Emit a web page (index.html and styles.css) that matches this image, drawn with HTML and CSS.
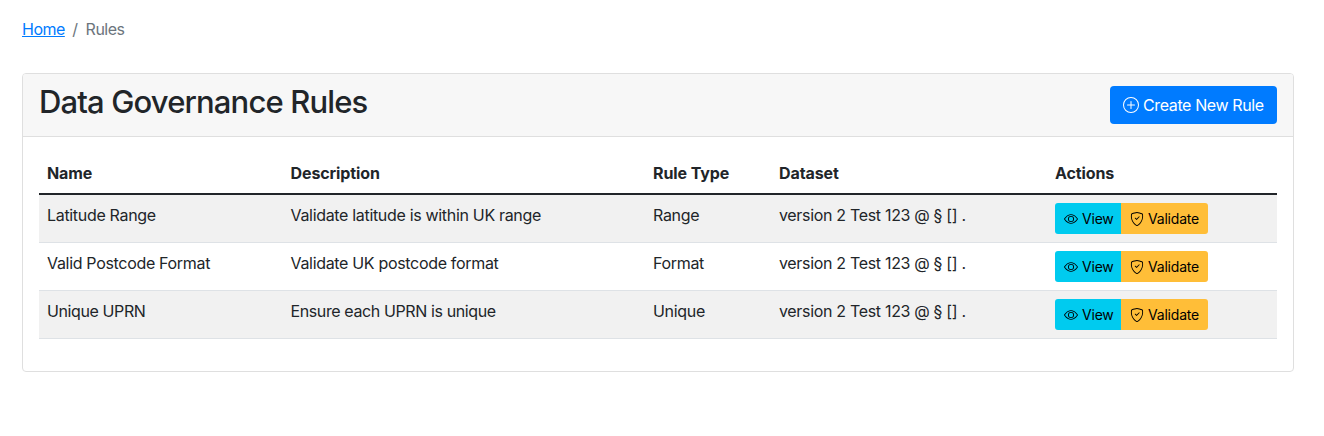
FILE: index.html
```html
<!DOCTYPE html>
<html lang="en">
<head>
<meta charset="utf-8">
<title>Data Governance Rules</title>
<link rel="stylesheet" href="styles.css">
</head>
<body>
<svg class="sprite" aria-hidden="true">
  <symbol id="plus-circle" viewBox="0 0 16 16"><path d="M8 15A7 7 0 1 1 8 1a7 7 0 0 1 0 14m0 1A8 8 0 1 0 8 0a8 8 0 0 0 0 16"/><path d="M8 4a.5.5 0 0 1 .5.5v3h3a.5.5 0 0 1 0 1h-3v3a.5.5 0 0 1-1 0v-3h-3a.5.5 0 0 1 0-1h3v-3A.5.5 0 0 1 8 4"/></symbol>
  <symbol id="eye" viewBox="0 0 16 16"><path d="M16 8s-3-5.500-8-5.500S0 8 0 8s3 5.500 8 5.500S16 8 16 8M1.173 8a13 13 0 0 1 1.660-2.043C4.120 4.668 5.880 3.500 8 3.500s3.879 1.168 5.168 2.457A13 13 0 0 1 14.828 8q-.086.130-.195.288c-.335.480-.830 1.120-1.465 1.755C11.879 11.332 10.119 12.500 8 12.500s-3.879-1.168-5.168-2.457A13 13 0 0 1 1.172 8z"/><path d="M8 5.500a2.500 2.500 0 1 0 0 5 2.500 2.500 0 0 0 0-5M4.500 8a3.500 3.500 0 1 1 7 0 3.500 3.500 0 0 1-7 0"/></symbol>
  <symbol id="shield-check" viewBox="0 0 16 16"><path d="M5.338 1.590a61 61 0 0 0-2.837.856.480.480 0 0 0-.328.390c-.554 4.157.726 7.190 2.253 9.188a10.700 10.700 0 0 0 2.287 2.233c.346.244.652.420.893.533q.180.085.293.118a1 1 0 0 0 .101.025 1 1 0 0 0 .100-.025q.114-.034.294-.118c.240-.113.547-.290.893-.533a10.700 10.700 0 0 0 2.287-2.233c1.527-1.997 2.807-5.031 2.253-9.188a.480.480 0 0 0-.328-.390c-.651-.213-1.750-.560-2.837-.855C9.552 1.290 8.531 1.067 8 1.067c-.530 0-1.552.223-2.662.524zM5.072.560C6.157.265 7.310 0 8 0s1.843.265 2.928.560c1.110.300 2.229.655 2.887.870a1.540 1.540 0 0 1 1.044 1.262c.596 4.477-.787 7.795-2.465 9.990a11.800 11.800 0 0 1-2.517 2.453 7 7 0 0 1-1.048.625c-.280.132-.581.240-.829.240s-.548-.108-.829-.240a7 7 0 0 1-1.048-.625 11.800 11.800 0 0 1-2.517-2.453C1.928 10.487.545 7.169 1.141 2.692A1.540 1.540 0 0 1 2.185 1.430 63 63 0 0 1 5.072.560"/><path d="M10.854 5.146a.5.5 0 0 1 0 .708l-3 3a.5.5 0 0 1-.708 0l-1.500-1.500a.5.5 0 1 1 .708-.708L7.500 7.793l2.646-2.647a.5.5 0 0 1 .708 0"/></symbol>
</svg>
<nav class="breadcrumb"><a href="#">Home</a><span class="divider">/</span><span>Rules</span></nav>
<main class="card">
  <header class="card-header">
    <h2>Data Governance Rules</h2>
    <a class="btn-create" href="#"><svg class="icon"><use href="#plus-circle"/></svg><span>Create New Rule</span></a>
  </header>
  <div class="card-body">
    <table class="table">
      <colgroup><col class="c-name"><col class="c-desc"><col class="c-type"><col class="c-data"><col></colgroup>
      <thead><tr><th>Name</th><th>Description</th><th>Rule Type</th><th>Dataset</th><th>Actions</th></tr></thead>
      <tbody>
        <tr><td>Latitude Range</td><td>Validate latitude is within UK range</td><td>Range</td><td>version 2 Test 123 @ § [] .</td>
          <td><div class="btn-group"><a class="btn view"><svg class="icon"><use href="#eye"/></svg>View</a><a class="btn validate"><svg class="icon"><use href="#shield-check"/></svg>Validate</a></div></td></tr>
        <tr><td>Valid Postcode Format</td><td>Validate UK postcode format</td><td>Format</td><td>version 2 Test 123 @ § [] .</td>
          <td><div class="btn-group"><a class="btn view"><svg class="icon"><use href="#eye"/></svg>View</a><a class="btn validate"><svg class="icon"><use href="#shield-check"/></svg>Validate</a></div></td></tr>
        <tr><td class="tight">Unique UPRN</td><td class="tight">Ensure each UPRN is unique</td><td>Unique</td><td>version 2 Test 123 @ § [] .</td>
          <td><div class="btn-group"><a class="btn view"><svg class="icon"><use href="#eye"/></svg>View</a><a class="btn validate"><svg class="icon"><use href="#shield-check"/></svg>Validate</a></div></td></tr>
      </tbody>
    </table>
  </div>
</main>
</body>
</html>
```
FILE: styles.css
```css
*, *::before, *::after { box-sizing: border-box; }
body { margin: 0; padding: 17px 30px 0 22px; font: 400 16px/24px Inter, "Liberation Sans", sans-serif; letter-spacing: -0.32px; color: #212529; background: #fff; }
.sprite { display: none; }
.icon { display: block; flex: none; fill: currentColor; }
.breadcrumb { display: flex; height: 24px; margin-bottom: 32px; color: #6c757d; white-space: nowrap; }
.breadcrumb a { color: #007bff; text-decoration: underline; }
.breadcrumb a, .breadcrumb span { letter-spacing: -0.5px; }
.divider { padding: 0 8px 0 7.5px; }
.card { height: 299px; border: 1px solid #dfdfdf; border-radius: 4px; }
.card-header { display: flex; justify-content: space-between; height: 63px; padding: 12px 16px; background: #f7f7f7; border-bottom: 1px solid #dfdfdf; border-radius: 3px 3px 0 0; }
h2 { margin: 0; font-size: 31px; line-height: 31px; font-weight: 530; letter-spacing: -0.86px; white-space: nowrap; }
.btn-create { display: flex; align-items: center; gap: 4px; width: 167px; height: 38px; padding: 0 13px; border-radius: 4px; background: #007bff; color: #fff; text-decoration: none; letter-spacing: -0.38px; white-space: nowrap; }
.btn-create .icon { width: 16px; height: 16px; }
.card-body { padding: 16px; }
.table { width: 100%; border-collapse: separate; border-spacing: 0; table-layout: fixed; }
.c-name { width: 243.5px; } .c-desc { width: 362.5px; } .c-type { width: 126px; } .c-data { width: 276px; }
th, td { padding: 8px; text-align: left; vertical-align: top; white-space: nowrap; }
th { height: 42px; font-weight: 700; letter-spacing: -0.1px; border-bottom: 2px solid #212529; }
td { height: 48px; border-bottom: 1px solid #dee2e6; }
.tight { letter-spacing: -0.39px; }
tbody tr:nth-child(odd) { background: #f1f1f1; }
.btn-group { display: flex; height: 31px; }
.btn { display: flex; align-items: center; gap: 4px; padding: 0 9px; font-size: 14px; line-height: 21px; letter-spacing: -0.2px; color: #000; }
.btn .icon { width: 14px; height: 14px; }
.view { width: 66px; background: #00cbef; border-radius: 3px 0 0 3px; }
.validate { width: 87px; background: #ffbe38; border-radius: 0 3px 3px 0; }
```
